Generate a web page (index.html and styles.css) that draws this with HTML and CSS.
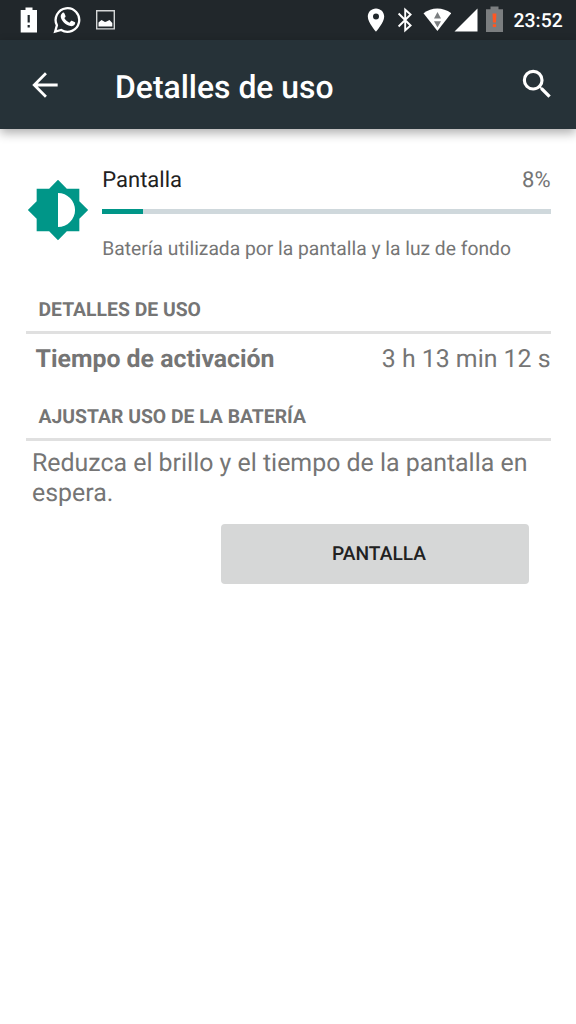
FILE: index.html
```html
<!DOCTYPE html>
<html lang="es">
<head>
<meta charset="utf-8">
<title>Detalles de uso</title>
<link rel="stylesheet" href="styles.css">
</head>
<body>
<header class="status">
  <div class="group">
    <svg class="battery-alert" width="17" height="40" viewBox="20 0 17 40"><path fill="#fff" fill-rule="evenodd" d="M25.5 7.500h7v2.500h4.500v22.500H20.700V10h4.800zM27.600 15v7.500h2.200V15zM27.600 25v2.500h2.200V25z"/></svg>
    <svg class="whatsapp" width="28" height="40" viewBox="53.500 .5 28 40"><path fill="none" stroke="#fff" stroke-width="2.300" d="M55.600 32.200l1.800-6.400A11.800 11.800 0 1 1 61.700 30.500z"/><path fill="#fff" d="M62.900 13.400c.8-.6 1.700-.4 2.100.5l1 2.500c.2.600-.1 1-1.200 2.200 1.200 2.200 2.900 3.700 5.200 4.700l1.500-1.700c.4-.5.800-.4 1.400-.1l2.100 1.100c.7.300.8.600.6 1.300-.5 2.300-2.900 3-4.700 2.700-4.900-.9-9.400-5.600-9.700-9.500 0-1.600.7-3 1.700-3.700z"/></svg>
    <svg width="20" height="40" viewBox="96 0 20 40"><path fill="none" stroke="#d5d7d8" stroke-width="1.400" d="M96.700 10.700h17.600v18.200H96.700z"/><path fill="#fff" d="M98.500 26.500v-4l3-2.500 3.500 2 1.500-.5 3-1.500 2.800 3v3.500z"/></svg>
  </div>
  <div class="group">
    <svg width="18" height="40" viewBox="367 0 18 40"><path fill="#fff" fill-rule="evenodd" d="M376 8.500c-4.700 0-8.200 3.600-8.200 8.100 0 6 8.200 15.200 8.200 15.200s8.200-9.200 8.200-15.200c0-4.500-3.500-8.100-8.200-8.100zm0 5.100a3 3 0 1 1 0 6 3 3 0 0 1 0-6z"/></svg>
    <svg class="bluetooth" width="16" height="40" viewBox="397 0 16 40"><path fill="none" stroke="#fff" stroke-width="1.900" d="M398.600 13.500l12 12-5.400 4.800V9.700l5.400 4.800-12 12"/></svg>
    <svg class="wifi" width="28" height="40" viewBox="423 0 28 40"><path fill="#fff" d="M423.500 13.200c8-6.300 19.600-6.300 27.700 0L437.400 31z"/><path fill="#7b7e80" d="M434 18.500h7l-3.500-6.500zM434 21.200h7l-3.500 6.300z"/></svg>
    <svg class="signal" width="24" height="40" viewBox="454 0 24 40"><path fill="#fff" d="M477.500 8.500v23h-23z"/></svg>
    <svg class="battery" width="18" height="40" viewBox="486 0 18 40"><path fill="#7b7e80" d="M490.500 6.500h8v2.700h4.500V32h-17V9.200h4.500z"/><path fill="#ff5722" d="M492.500 13.500h3.900l-.4 9h-3.100zM492.800 24.200h3.300V27h-3.300z"/></svg>
    <span class="clock">23:52</span>
  </div>
</header>
<nav class="appbar">
  <svg class="back" width="38" height="38" viewBox="0 0 24 24"><path fill="none" stroke="#fff" stroke-width="1.750" d="M20 12H5.200M12.600 4.600L5.200 12l7.400 7.400"/></svg>
  <h1 class="title">Detalles de uso</h1>
  <svg width="38.400" height="38.400" viewBox="0 0 24 24"><path fill="#fff" d="M15.500 14h-.79l-.28-.27A6.471 6.471 0 0 0 16 9.500 6.500 6.500 0 1 0 9.500 16c1.610 0 3.090-.59 4.230-1.570l.27.28v.79l5 4.990L20.490 19l-4.990-5zm-6 0C7.010 14 5 11.990 5 9.500S7.010 5 9.500 5 14 7.010 14 9.500 11.990 14 9.500 14z"/></svg>
</nav>
<main class="content">
  <section class="summary">
    <svg class="brightness" width="64" height="64" viewBox="0 0 24 24"><path fill="#009688" d="M20 15.310L23.310 12 20 8.690V4h-4.690L12 .69 8.690 4H4v4.690L.69 12 4 15.310V20h4.690L12 23.310 15.310 20H20v-4.690zM12 18.400V5.600c3.500 0 6.400 2.900 6.400 6.400s-2.900 6.400-6.400 6.400z"/></svg>
    <div class="info">
      <div class="row"><span class="name">Pantalla</span><span class="percent">8%</span></div>
      <div class="track"><div class="fill"></div></div>
      <p class="description">Batería utilizada por la pantalla y la luz de fondo</p>
    </div>
  </section>
  <h2 class="heading">DETALLES DE USO</h2>
  <div class="detail"><b class="label">Tiempo de activación</b><span class="value">3 h 13 min 12 s</span></div>
  <h2 class="heading">AJUSTAR USO DE LA BATERÍA</h2>
  <p class="advice">Reduzca el brillo y el tiempo de la pantalla en espera.</p>
  <button class="action">PANTALLA</button>
</main>
</body>
</html>
```
FILE: styles.css
```css
* { box-sizing: border-box; }
body { margin: 0; min-height: 1024px; background: #fff; color: #757575; font-family: Roboto, "Noto Sans", sans-serif; text-rendering: geometricPrecision; }
h1, h2, p { margin: 0; }
svg { display: block; flex: none; }
.status { display: flex; justify-content: space-between; height: 40px; padding: 0 13px 0 20px; background: #21272b; }
.group { display: flex; align-items: center; }
.battery-alert, .whatsapp { margin-right: 15.500px; }
.bluetooth { margin: 0 10px 0 12px; }
.signal { margin: 0 7.500px 0 3px; }
.clock { width: 49px; margin-left: 10px; margin-right: .5px; padding-top: 1px; color: #fff; font-size: 19.400px; font-weight: 500; line-height: 42px; white-space: nowrap; }
.appbar { display: flex; align-items: center; height: 89px; padding: 0 20px 0 26px; background: #263238; box-shadow: 0 4px 10px rgba(0, 0, 0, .32); color: #fff; }
.title { flex: 1; margin: 4px 0 0 51px; font-size: 31.900px; font-weight: 500; line-height: 38px; white-space: nowrap; }
.content { padding: 36px 25.500px 0; }
.summary { display: flex; align-items: center; height: 98px; }
.brightness { margin: -8px 0 0; }
.info { flex: 1; margin-left: 12.800px; }
.row { display: flex; justify-content: space-between; padding-top: 2px; font-size: 22px; line-height: 28px; }
.name { color: #212121; }
.track { height: 5px; margin: 14px 0 23px; background: #cfd8dc; }
.fill { width: 9.100%; height: 100%; background: #009688; }
.description { margin-bottom: 3px; font-size: 19.270px; line-height: 23px; white-space: nowrap; }
.heading { height: 71px; padding: 35px 13px 0; border-bottom: 3px solid #e0e0e0; font-size: 19.350px; font-weight: 700; line-height: 24px; }
.detail { display: flex; justify-content: space-between; height: 36px; padding: 11px 0 0 10px; font-size: 24.850px; line-height: 30px; white-space: nowrap; }
.advice { padding: 8px 0 0 6.500px; font-size: 24.900px; line-height: 30px; }
.action { display: block; width: 308px; height: 60px; margin: 14.500px 21.500px 0 auto; padding: 0 0 0 8px; border: 0; border-radius: 4px; background: #d6d7d7; color: #212121; font: 500 19.200px/59px Roboto, "Noto Sans", sans-serif; text-rendering: geometricPrecision; }
```
